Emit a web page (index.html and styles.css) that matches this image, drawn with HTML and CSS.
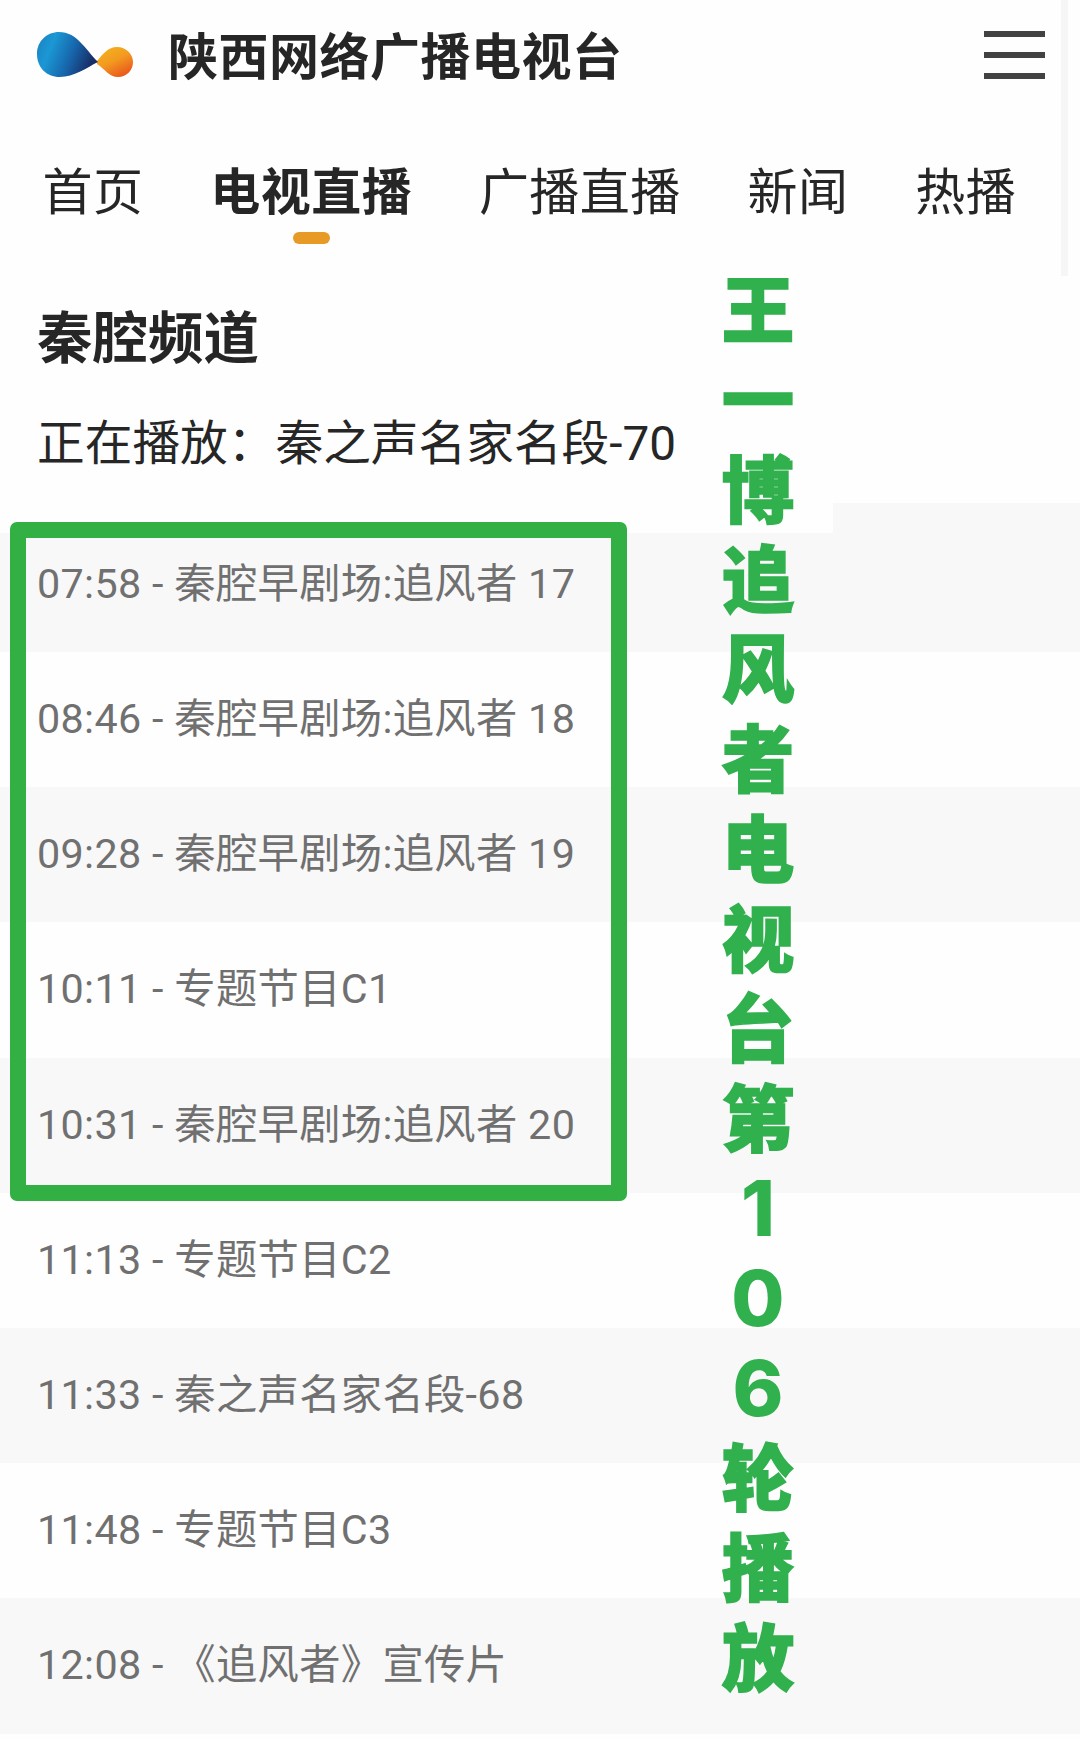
FILE: index.html
```
<!DOCTYPE html>
<html lang="zh-CN">
<head>
  <meta charset="UTF-8">
  <meta name="viewport" content="width=device-width, initial-scale=1.0">
  <title>陕西网络广播电视台</title>
  <link rel="stylesheet" href="styles.css">
</head>
<body>
  <!-- Header -->
  <header class="header">
    <svg class="logo" width="98" height="48" viewBox="0 0 98 48">
      <defs>
        <linearGradient id="blue" x1="0" y1="0" x2="1" y2="0.3">
          <stop offset="0" stop-color="#1c7fc0"/>
          <stop offset="0.3" stop-color="#1b98d4"/>
          <stop offset="0.65" stop-color="#1767ad"/>
          <stop offset="1" stop-color="#172f68"/>
        </linearGradient>
        <linearGradient id="orange" x1="0.2" y1="0" x2="0.8" y2="1">
          <stop offset="0" stop-color="#f2b21c"/>
          <stop offset="0.45" stop-color="#f39a20"/>
          <stop offset="1" stop-color="#e8501c"/>
        </linearGradient>
      </defs>
      <path fill="url(#orange)" d="M61 30 C67 23 72 16 81 16 C90 16 97 23 97 31 C97 39 91 46 82 46 C73 46 69 38 61 33 Z"/>
      <path fill="url(#blue)" d="M23 1 C41 1 49 18 62 31 C50 37 38 46 24 46 C10 46 1 36 1 23 C1 10 11 1 23 1 Z"/>
    </svg>
    <h1 class="site-name">陕西网络广播电视台</h1>
    <div class="menu-btn">
      <span></span>
      <span></span>
      <span></span>
    </div>
  </header>

  <!-- Navigation -->
  <nav class="nav">
    <a>首页</a>
    <a class="active">电视直播</a>
    <a>广播直播</a>
    <a>新闻</a>
    <a>热播</a>
  </nav>
  <div class="side-line"></div>

  <!-- Channel info -->
  <section class="channel">
    <h2>秦腔频道</h2>
    <p>正在播放：秦之声名家名段-70</p>
  </section>

  <!-- Schedule -->
  <ul class="schedule">
    <li>07:58 - 秦腔早剧场:追风者 17</li>
    <li>08:46 - 秦腔早剧场:追风者 18</li>
    <li>09:28 - 秦腔早剧场:追风者 19</li>
    <li>10:11 - 专题节目C1</li>
    <li>10:31 - 秦腔早剧场:追风者 20</li>
    <li>11:13 - 专题节目C2</li>
    <li>11:33 - 秦之声名家名段-68</li>
    <li>11:48 - 专题节目C3</li>
    <li>12:08 - 《追风者》宣传片</li>
  </ul>

  <!-- Green marks over the page -->
  <div class="highlight-box"></div>
  <div class="caption">
    <span>王</span>
    <span>一</span>
    <span>博</span>
    <span>追</span>
    <span>风</span>
    <span>者</span>
    <span>电</span>
    <span>视</span>
    <span>台</span>
    <span>第</span>
    <span class="num">1</span>
    <span class="num">0</span>
    <span class="num">6</span>
    <span>轮</span>
    <span>播</span>
    <span>放</span>
  </div>
</body>
</html>
```
FILE: styles.css
```
* {
  box-sizing: border-box;
}

body {
  margin: 0;
  width: 1080px;
  height: 1739px;
  overflow: hidden;
  position: relative;
  background-color: #fefefe;
  color: #262626;
  font-family: Roboto, "Noto Sans CJK SC", sans-serif;
}

.header {
  height: 110px;
  padding: 0 35px 0 36px;
  display: flex;
  align-items: center;
}

.logo {
  margin-bottom: 1px;
}

.site-name {
  margin: 0 0 4px 34px;
  font-size: 50px;
  font-weight: 700;
  letter-spacing: 0.5px;
}

.menu-btn {
  margin-left: auto;
  width: 61px;
  height: 48px;
  display: flex;
  flex-direction: column;
  justify-content: space-between;
}

.menu-btn span {
  height: 6px;
  background-color: #424242;
}

.nav {
  height: 162px;
  padding: 45px 0 0 42.5px;
  display: flex;
  gap: 66.7px;
  font-size: 50px;
  letter-spacing: 0.5px;
  line-height: 76px;
  white-space: nowrap;
}

.nav .active {
  font-weight: 700;
  display: flex;
  flex-direction: column;
  align-items: center;
}

.nav .active::after {
  content: "";
  width: 37px;
  height: 12px;
  margin-top: 1px;
  border-radius: 6px;
  background-color: #e79a25;
}

/* faint strip at the right edge */
.side-line {
  position: absolute;
  top: 0;
  left: 1061px;
  width: 7px;
  height: 276px;
  background-color: #f6f6f6;
}

.channel {
  height: 261px;
  padding: 28px 0 0 37px;
}

.channel h2 {
  margin: 0;
  font-size: 55.5px;
  line-height: 80px;
  font-weight: 700;
}

.channel p {
  margin: 29px 0 0;
  font-size: 47.7px;
  line-height: 70px;
}

.schedule {
  position: relative;
  list-style: none;
  margin: 0;
  padding: 0;
}

.schedule li {
  height: 135.2px;
  padding-left: 37px;
  font-size: 41.3px;
  line-height: 135px;
  letter-spacing: 0.32px;
  color: #707070;
}

.schedule li:nth-child(odd) {
  background-color: #f8f8f8;
}

.schedule li:first-child {
  height: 119px;
  line-height: 103px;
}

/* the first row reaches higher on the right */
.schedule::before {
  content: "";
  position: absolute;
  top: -30px;
  left: 833px;
  width: 247px;
  height: 30px;
  background-color: #f8f8f8;
}

.highlight-box {
  position: absolute;
  top: 522px;
  left: 10px;
  width: 617px;
  height: 679px;
  border: 16px solid #32b044;
  border-radius: 7px;
}

.caption {
  position: absolute;
  top: 261px;
  left: 708px;
  width: 100px;
  display: flex;
  flex-direction: column;
  align-items: center;
  font-family: "Noto Sans CJK SC", sans-serif;
  font-size: 72.5px;
  font-weight: 900;
  line-height: 89.85px;
  color: #31b04e;
  -webkit-text-stroke: 1.5px #31b04e;
}

.caption .num {
  height: 89.85px;
  font-family: Inter, sans-serif;
  font-size: 77px;
  font-weight: 800;
  line-height: 98px;
  -webkit-text-stroke: 0;
}
```
